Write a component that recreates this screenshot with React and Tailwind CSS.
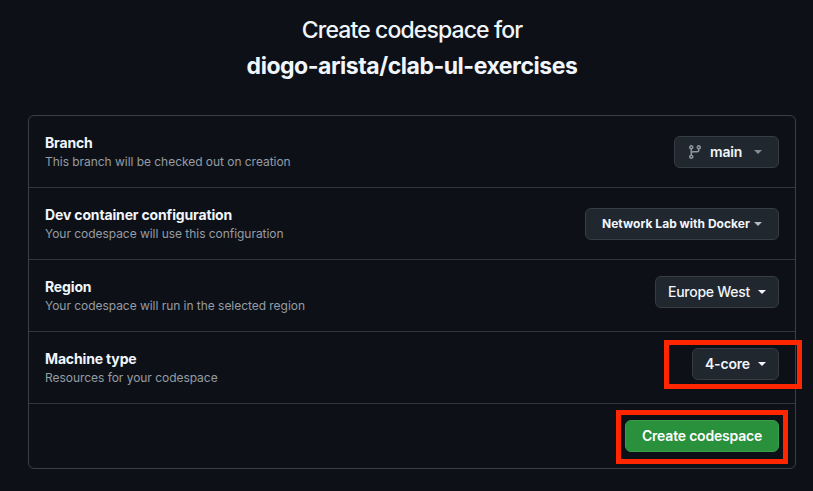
function Caret({ className }) {
  return <span className={`h-0 w-0 border-x-4 border-t-4 border-x-transparent ${className}`} />;
}

function BranchIcon() {
  return (
    <svg className="ml-3 h-4 w-4 shrink-0 fill-[#8d96a0]" viewBox="0 0 16 16" aria-hidden="true">
      <path d="M9.5 3.25a2.25 2.25 0 1 1 3 2.122V6A2.5 2.5 0 0 1 10 8.5H6a1 1 0 0 0-1 1v1.128a2.251 2.251 0 1 1-1.5 0V5.372a2.25 2.25 0 1 1 1.5 0v1.836A2.493 2.493 0 0 1 6 7h4a1 1 0 0 0 1-1v-.628A2.25 2.25 0 0 1 9.5 3.25Zm-6 0a.75.75 0 1 0 1.5 0 .75.75 0 0 0-1.5 0Zm8.25-.75a.75.75 0 1 0 0 1.5.75.75 0 0 0 0-1.5ZM4.25 12a.75.75 0 1 0 0 1.5.75.75 0 0 0 0-1.5Z" />
    </svg>
  );
}

function Button({ className, children }) {
  return (
    <button
      className={`flex h-8 shrink-0 items-center whitespace-nowrap rounded-md border border-[#363c44] bg-[#21272e] text-left text-[#f0f6fc] ${className}`}
    >
      {children}
    </button>
  );
}

function Row({ title, note, children }) {
  return (
    <div className="flex h-[72px] items-start justify-between border-b border-[#31363e] px-4 pt-4">
      <div className="whitespace-nowrap">
        <h2 className="text-sm leading-[21px] font-bold tracking-[-0.15px] text-[#f0f6fc]">{title}</h2>
        <p className="text-xs leading-[18px] tracking-[-0.04px] text-[#959ca5]">{note}</p>
      </div>
      {children}
    </div>
  );
}

function Highlight({ className }) {
  return <div className={`pointer-events-none absolute border-[5px] border-[#ff2600] ${className}`} />;
}

export default function App() {
  return (
    <main className="relative h-[491px] w-[813px] overflow-hidden bg-[#0d1117] pl-7 font-['Inter',sans-serif]">
      <h1 className="w-[768px] pt-3 text-center text-[23px] leading-9 text-[#f0f6fc]">
        <span className="block font-[450] tracking-[-0.88px]">Create codespace for</span>
        <span className="block font-bold tracking-[-0.46px]">diogo-arista/clab-ul-exercises</span>
      </h1>

      <section className="mt-[31px] w-[768px] rounded-md border border-[#3a3f47]">
        <Row title="Branch" note="This branch will be checked out on creation">
          <Button className="mt-1 w-[105px] text-sm font-semibold">
            <BranchIcon />
            <span className="ml-[7px] w-8 tracking-[-0.2px]">main</span>
            <Caret className="ml-3 border-t-[#848d97]" />
          </Button>
        </Row>
        <Row title="Dev container configuration" note="Your codespace will use this configuration">
          <Button className="mt-1 w-[194px] pl-4 text-xs font-bold">
            <span className="w-[148px] tracking-[0.02px]">Network Lab with Docker</span>
            <Caret className="ml-1 border-t-[#b4bac1]" />
          </Button>
        </Row>
        <Row title="Region" note="Your codespace will run in the selected region">
          <Button className="w-[124px] pl-3 text-sm font-[450]">
            <span className="w-[82px] tracking-[-0.26px]">Europe West</span>
            <Caret className="ml-2 border-t-[#f0f6fc]" />
          </Button>
        </Row>
        <Row title="Machine type" note="Resources for your codespace">
          <Button className="w-[87px] pl-3 text-sm font-semibold">
            <span className="w-[45px] tracking-[-0.2px]">4-core</span>
            <Caret className="ml-2 border-t-[#f0f6fc]" />
          </Button>
        </Row>
        <div className="flex h-16 items-start justify-end px-4 pt-4">
          <button className="h-8 w-[154px] whitespace-nowrap rounded-md border border-[#3b9c49] bg-[#29903b] text-sm font-semibold tracking-[-0.2px] text-white">
            Create codespace
          </button>
        </div>
      </section>

      <Highlight className="top-[340px] left-[664px] h-[49px] w-[138px]" />
      <Highlight className="top-[410px] left-[616px] h-[54px] w-[172px]" />
    </main>
  );
}
